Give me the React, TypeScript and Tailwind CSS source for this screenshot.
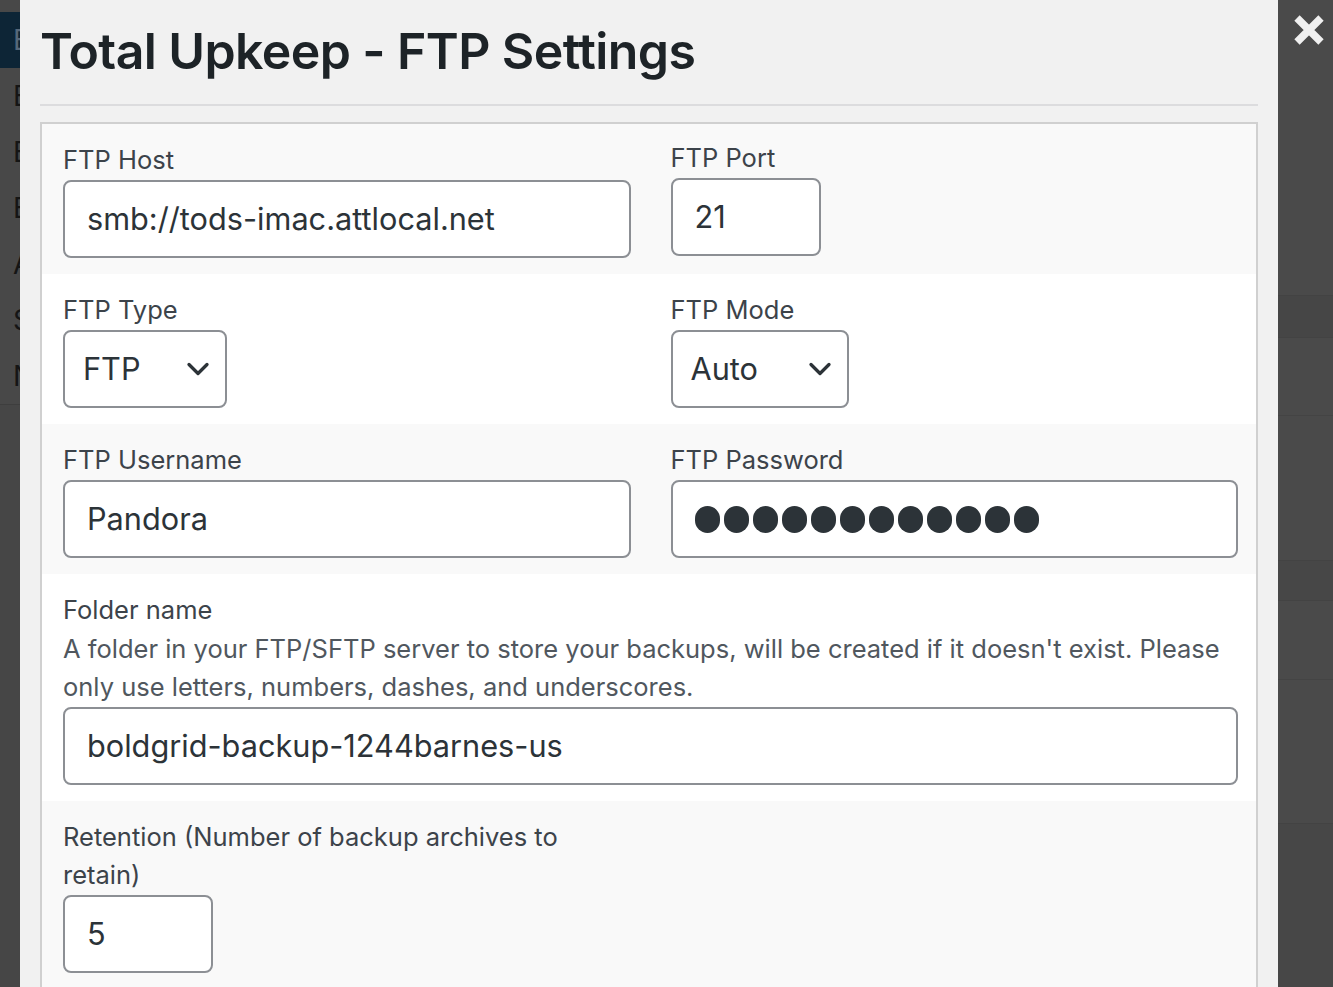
import { ChevronDown } from "lucide-react";

const leftLetters = ["E", "E", "A", "S", "N"];

function TextInput({ value, className = "" }: { value: string; className?: string }) {
  return (
    <div
      className={
        "h-[78px] rounded-[8px] border-2 border-[#8c8f94] bg-white pl-[22px] flex items-center text-[30.7px] text-[#2c3338] " +
        className
      }
    >
      {value}
    </div>
  );
}

function Select({ value, className = "" }: { value: string; className?: string }) {
  return (
    <div
      className={
        "h-[78px] rounded-[8px] border-2 border-[#8c8f94] bg-white pl-[18px] pr-[9px] flex items-center justify-between text-[30.7px] text-[#2c3338] " +
        className
      }
    >
      <span>{value}</span>
      <ChevronDown className="w-[36px] h-[36px] text-[#2c3338]" strokeWidth={2.2} />
    </div>
  );
}

function Label({ children }: { children: React.ReactNode }) {
  return <div className="text-[25.5px] leading-[38px] text-[#3c434a] mb-[1px]">{children}</div>;
}

export default function App() {
  return (
    <div className="flex h-screen w-full overflow-hidden bg-[#4a4a4a] font-['Inter','Noto_Sans',sans-serif]">
      {/* admin menu behind the overlay */}
      <div className="w-[20px] shrink-0 overflow-hidden flex flex-col">
        <div className="h-[12px] bg-[#484848]" />
        <div className="h-[56px] bg-[#0d2536] pl-[13px] flex items-center text-[28px] text-[#56687a]">E</div>
        {["E", ...leftLetters].map((l, i) => (
          <div key={i} className="h-[56px] bg-[#484848] pl-[13px] flex items-center text-[28px] text-[#151515]">
            {l}
          </div>
        ))}
        <div className="flex-1 bg-[#464646] border-t border-[#3e3e3e]" />
      </div>

      {/* modal */}
      <div className="w-[1258px] shrink-0 bg-[#f1f1f1] px-[20px] flex flex-col">
        <div className="h-[106px] shrink-0 border-b-2 border-[#dcdcde] flex items-center">
          <h1 className="text-[50px] font-semibold leading-none text-[#1d2327] tracking-[-0.6px] -mt-[2px]">
            Total Upkeep - FTP Settings
          </h1>
        </div>

        <div className="mt-[16px] border-2 border-b-0 border-[#d0d0d0] bg-white flex-1">
          <div className="bg-[#f9f9f9] pl-[21px] pr-[18px] pt-[17px] pb-[16px] grid grid-cols-2 gap-x-[40px]">
            <div>
              <Label>FTP Host</Label>
              <TextInput value="smb://tods-imac.attlocal.net" />
            </div>
            <div className="-mt-[2px]">
              <Label>FTP Port</Label>
              <TextInput value="21" className="w-[150px]" />
            </div>
          </div>

          <div className="bg-white pl-[21px] pr-[18px] pt-[17px] pb-[16px] grid grid-cols-2 gap-x-[40px]">
            <div>
              <Label>FTP Type</Label>
              <Select value="FTP" className="w-[164px]" />
            </div>
            <div>
              <Label>FTP Mode</Label>
              <Select value="Auto" className="w-[178px]" />
            </div>
          </div>

          <div className="bg-[#f9f9f9] pl-[21px] pr-[18px] pt-[17px] pb-[16px] grid grid-cols-2 gap-x-[40px]">
            <div>
              <Label>FTP Username</Label>
              <TextInput value="Pandora" />
            </div>
            <div>
              <Label>FTP Password</Label>
              <div className="h-[78px] rounded-[8px] border-2 border-[#8c8f94] bg-white pl-[22px] flex items-center gap-[4px]">
                {Array.from({ length: 12 }).map((_, i) => (
                  <span key={i} className="w-[25px] h-[27px] rounded-full bg-[#2c3338]" />
                ))}
              </div>
            </div>
          </div>

          <div className="bg-white pl-[21px] pr-[18px] pt-[17px] pb-[16px]">
            <Label>Folder name</Label>
            <p className="text-[25.5px] leading-[38px] text-[#50575e]">
              A folder in your FTP/SFTP server to store your backups, will be created if it doesn't exist. Please
              only use letters, numbers, dashes, and underscores.
            </p>
            <TextInput value="boldgrid-backup-1244barnes-us" className="mt-[1px]" />
          </div>

          <div className="bg-[#f9f9f9] pl-[21px] pr-[18px] pt-[17px] pb-[16px] grid grid-cols-2 gap-x-[40px]">
            <div>
              <Label>Retention (Number of backup archives to retain)</Label>
              <TextInput value="5" className="w-[150px]" />
            </div>
          </div>
        </div>
      </div>

      {/* page behind the overlay, right side */}
      <div className="flex-1 flex flex-col">
        <div className="h-[295px] bg-[#4a4a4a] pt-[14px] pl-[15px]">
          <svg width="32" height="32" viewBox="0 0 32 32">
            <path d="M4 4 L28 28 M28 4 L4 28" stroke="#f0f0f0" strokeWidth="7.5" />
          </svg>
        </div>
        <div className="h-[42px] bg-[#464646] border-t border-[#434343]" />
        <div className="h-[78px] bg-[#4a4a4a] border-t border-[#434343]" />
        <div className="h-[145px] bg-[#4a4a4a] border-t border-[#444444]" />
        <div className="h-[40px] bg-[#474747] border-t border-[#434343]" />
        <div className="h-[79px] bg-[#4a4a4a] border-t border-[#434343]" />
        <div className="h-[144px] bg-[#4a4a4a] border-t border-[#444444]" />
        <div className="flex-1 bg-[#474747] border-t border-[#434343]" />
      </div>
    </div>
  );
}
